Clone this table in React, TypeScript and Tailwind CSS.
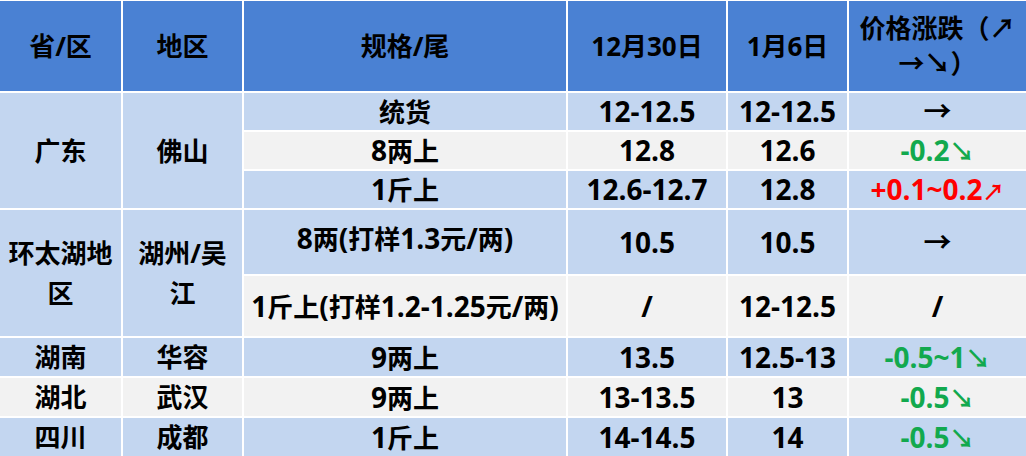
import React from 'react'

const font = { fontFamily: '"Open Sans", "Noto Sans CJK SC", sans-serif' }

type Tone = 'blue' | 'gray' | 'head'

// digits in the sheet are set a little larger than the Chinese text
function Mixed({ s }: { s: string }) {
  const parts = s.split(/([\u4e00-\u9fff（）]+)/).filter(Boolean)
  return (
    <>
      {parts.map((p, i) =>
        /[\u4e00-\u9fff（）]/.test(p) ? (
          <span key={i}>{p}</span>
        ) : (
          <span key={i} className="text-[28px]">
            {p}
          </span>
        ),
      )}
    </>
  )
}

function Cell({
  children,
  tone = 'blue',
  className = '',
}: {
  children: React.ReactNode
  tone?: Tone
  className?: string
}) {
  const bg =
    tone === 'head' ? 'bg-[#4a81d3]' : tone === 'gray' ? 'bg-[#f2f2f2]' : 'bg-[#c3d6f0]'
  const content = typeof children === 'string' && tone !== 'head' ? <Mixed s={children} /> : children
  return (
    <div
      className={`${bg} flex items-center justify-center text-center font-bold text-black text-[26px] leading-[32px] whitespace-nowrap ${className}`}
    >
      <div>{content}</div>
    </div>
  )
}

const Down = ({ text }: { text: string }) => (
  <span className="text-[#12a94e] text-[28px]">
    {text}
    <span className="text-[25px]">↘</span>
  </span>
)

export default function App() {
  return (
    <div
      style={font}
      className="w-[1026px] h-[456px] bg-white pt-px grid gap-[2px] grid-cols-[121px_119px_322px_158px_119px_1fr] grid-rows-[90px_37px_37px_37px_64px_60px_38px_38px_38px] overflow-hidden"
    >
      {/* header */}
      <Cell tone="head">省/区</Cell>
      <Cell tone="head">地区</Cell>
      <Cell tone="head">规格/尾</Cell>
      <Cell tone="head">12月30日</Cell>
      <Cell tone="head">1月6日</Cell>
      <Cell tone="head" className="leading-[35px] px-2">
        价格涨跌（↗<br />→↘）
      </Cell>

      {/* 广东 */}
      <Cell className="row-span-3">广东</Cell>
      <Cell className="row-span-3">佛山</Cell>
      <Cell>统货</Cell>
      <Cell>12-12.5</Cell>
      <Cell>12-12.5</Cell>
      <Cell>→</Cell>

      <Cell tone="gray">8两上</Cell>
      <Cell tone="gray">12.8</Cell>
      <Cell tone="gray">12.6</Cell>
      <Cell tone="gray">
        <Down text="-0.2" />
      </Cell>

      <Cell>1斤上</Cell>
      <Cell>12.6-12.7</Cell>
      <Cell>12.8</Cell>
      <Cell>
        <span className="text-[#f00] text-[28px]">
          +0.1~0.2<span className="text-[22px]">↗</span>
        </span>
      </Cell>

      {/* 环太湖 */}
      <Cell className="row-span-2 leading-[40px] px-1 whitespace-normal">
        环太湖地
        <br />区
      </Cell>
      <Cell className="row-span-2 leading-[40px] px-1 whitespace-normal">
        湖州/吴
        <br />江
      </Cell>
      <Cell className="items-start pt-[12px]">8两(打样1.3元/两)</Cell>
      <Cell>10.5</Cell>
      <Cell>10.5</Cell>
      <Cell>→</Cell>

      <Cell tone="gray">1斤上(打样1.2-1.25元/两)</Cell>
      <Cell tone="gray">/</Cell>
      <Cell tone="gray">12-12.5</Cell>
      <Cell tone="gray">/</Cell>

      {/* 湖南 */}
      <Cell>湖南</Cell>
      <Cell>华容</Cell>
      <Cell>9两上</Cell>
      <Cell>13.5</Cell>
      <Cell>12.5-13</Cell>
      <Cell>
        <Down text="-0.5~1" />
      </Cell>

      {/* 湖北 */}
      <Cell tone="gray">湖北</Cell>
      <Cell tone="gray">武汉</Cell>
      <Cell tone="gray">9两上</Cell>
      <Cell tone="gray">13-13.5</Cell>
      <Cell tone="gray">13</Cell>
      <Cell tone="gray">
        <Down text="-0.5" />
      </Cell>

      {/* 四川 */}
      <Cell>四川</Cell>
      <Cell>成都</Cell>
      <Cell>1斤上</Cell>
      <Cell>14-14.5</Cell>
      <Cell>14</Cell>
      <Cell>
        <Down text="-0.5" />
      </Cell>
    </div>
  )
}
